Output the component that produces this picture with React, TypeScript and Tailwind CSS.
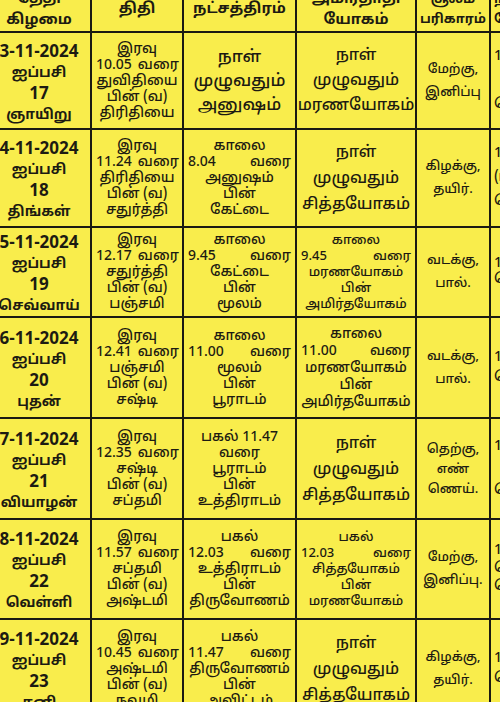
import React from "react";

type Cell = { lines: string[]; size: number; lh: number; bold?: boolean };

const colWidths = ["w-[104px]", "w-[92px]", "w-[113px]", "w-[120px]", "w-[74px]", "w-[120px]"];

const header: Cell[] = [
  { lines: ["தேதி", "கிழமை"], size: 15, lh: 21, bold: true },
  { lines: ["திதி"], size: 15, lh: 20, bold: true },
  { lines: ["நட்சத்திரம்"], size: 15, lh: 20, bold: true },
  { lines: ["அமிர்தாதி", "யோகம்"], size: 15, lh: 21, bold: true },
  { lines: ["சூலம்", "பரிகாரம்"], size: 13, lh: 20, bold: true },
  { lines: ["நல்ல", "நேரம்"], size: 13, lh: 20, bold: true },
];

const rows: { h: string; cells: Cell[] }[] = [
  {
    h: "h-[97px]",
    cells: [
      { lines: ["3-11-2024", "ஐப்பசி", "17", "ஞாயிறு"], size: 17, lh: 21, bold: true },
      { lines: ["இரவு", "10.05 வரை", "துவிதியை", "பின் (வ)", "திரிதியை"], size: 14, lh: 16 },
      { lines: ["நாள்", "முழுவதும்", "அனுஷம்"], size: 17, lh: 24 },
      { lines: ["நாள்", "முழுவதும்", "மரணயோகம்"], size: 16, lh: 25 },
      { lines: ["மேற்கு,", "இனிப்பு"], size: 13, lh: 23 },
      { lines: ["10.30", "", "மெ"], size: 14, lh: 24 },
    ],
  },
  {
    h: "h-[98px]",
    cells: [
      { lines: ["4-11-2024", "ஐப்பசி", "18", "திங்கள்"], size: 17, lh: 21, bold: true },
      { lines: ["இரவு", "11.24 வரை", "திரிதியை", "பின் (வ)", "சதுர்த்தி"], size: 14, lh: 16 },
      { lines: ["காலை", "8.04 வரை", "அனுஷம்", "பின்", "கேட்டை"], size: 14, lh: 16 },
      { lines: ["நாள்", "முழுவதும்", "சித்தயோகம்"], size: 16, lh: 26 },
      { lines: ["கிழக்கு,", "தயிர்."], size: 13, lh: 23 },
      { lines: ["1.30", "(மா)", "மெ"], size: 14, lh: 24 },
    ],
  },
  {
    h: "h-[90px]",
    cells: [
      { lines: ["5-11-2024", "ஐப்பசி", "19", "செவ்வாய்"], size: 17, lh: 21, bold: true },
      { lines: ["இரவு", "12.17 வரை", "சதுர்த்தி", "பின் (வ)", "பஞ்சமி"], size: 14, lh: 16 },
      { lines: ["காலை", "9.45 வரை", "கேட்டை", "பின்", "மூலம்"], size: 14, lh: 16 },
      { lines: ["காலை", "9.45 வரை", "மரணயோகம்", "பின்", "அமிர்தயோகம்"], size: 13, lh: 16 },
      { lines: ["வடக்கு,", "பால்."], size: 13, lh: 23 },
      { lines: ["12.00", "மெ"], size: 14, lh: 16 },
    ],
  },
  {
    h: "h-[101px]",
    cells: [
      { lines: ["6-11-2024", "ஐப்பசி", "20", "புதன்"], size: 17, lh: 21, bold: true },
      { lines: ["இரவு", "12.41 வரை", "பஞ்சமி", "பின் (வ)", "சஷ்டி"], size: 14, lh: 16 },
      { lines: ["காலை", "11.00 வரை", "மூலம்", "பின்", "பூராடம்"], size: 14, lh: 16 },
      { lines: ["காலை", "11.00 வரை", "மரணயோகம்", "பின்", "அமிர்தயோகம்"], size: 14, lh: 17 },
      { lines: ["வடக்கு,", "பால்."], size: 13, lh: 23 },
      { lines: ["10.30", "மெ"], size: 14, lh: 20 },
    ],
  },
  {
    h: "h-[101px]",
    cells: [
      { lines: ["7-11-2024", "ஐப்பசி", "21", "வியாழன்"], size: 17, lh: 21, bold: true },
      { lines: ["இரவு", "12.35 வரை", "சஷ்டி", "பின் (வ)", "சப்தமி"], size: 14, lh: 16 },
      { lines: ["பகல் 11.47", "வரை", "பூராடம்", "பின்", "உத்திராடம்"], size: 14, lh: 16 },
      { lines: ["நாள்", "முழுவதும்", "சித்தயோகம்"], size: 16, lh: 26 },
      { lines: ["தெற்கு,", "எண்", "ணெய்."], size: 13, lh: 20 },
      { lines: ["12.00", "", "மெ"], size: 14, lh: 22 },
    ],
  },
  {
    h: "h-[100px]",
    cells: [
      { lines: ["8-11-2024", "ஐப்பசி", "22", "வெள்ளி"], size: 17, lh: 21, bold: true },
      { lines: ["இரவு", "11.57 வரை", "சப்தமி", "பின் (வ)", "அஷ்டமி"], size: 14, lh: 16 },
      { lines: ["பகல்", "12.03 வரை", "உத்திராடம்", "பின்", "திருவோணம்"], size: 14, lh: 16 },
      { lines: ["பகல்", "12.03 வரை", "சித்தயோகம்", "பின்", "மரணயோகம்"], size: 13, lh: 16 },
      { lines: ["மேற்கு,", "இனிப்பு."], size: 13, lh: 23 },
      { lines: ["11.30", "மெ", "மெ"], size: 14, lh: 18 },
    ],
  },
  {
    h: "h-[100px]",
    cells: [
      { lines: ["9-11-2024", "ஐப்பசி", "23", "சனி"], size: 17, lh: 21, bold: true },
      { lines: ["இரவு", "10.45 வரை", "அஷ்டமி", "பின் (வ)", "நவமி"], size: 14, lh: 16 },
      { lines: ["பகல்", "11.47 வரை", "திருவோணம்", "பின்", "அவிட்டம்"], size: 14, lh: 16 },
      { lines: ["நாள்", "முழுவதும்", "சித்தயோகம்"], size: 16, lh: 26 },
      { lines: ["கிழக்கு,", "தயிர்."], size: 13, lh: 23 },
      { lines: ["10.30", "மெ"], size: 14, lh: 20 },
    ],
  },
];

function CellBox({ cell, col, isHeader }: { cell: Cell; col: number; isHeader?: boolean }) {
  const isLastCol = col === 5;
  return (
    <div
      className={`${colWidths[col]} shrink-0 h-full flex flex-col justify-center border-b-2 border-[#1b1a12] px-[3px] ${
        isLastCol ? "items-start" : "items-center border-r-2"
      } ${!isHeader && col === 0 ? "pt-[6px]" : ""} ${!isHeader && col > 0 && col < 5 ? "pt-[2px]" : ""}`}
      style={{ fontSize: cell.size, lineHeight: `${cell.lh}px`, fontWeight: cell.bold ? 700 : 500 }}
    >
      {cell.lines.map((l, i) => {
        if (/\d\.\d\d வரை/.test(l)) {
          return (
            <div key={i} className="flex w-full justify-between gap-[6px] whitespace-nowrap px-[1px]">
              {l.split(" ").map((w, j) => (
                <span key={j}>{w}</span>
              ))}
            </div>
          );
        }
        const smallTamil = !isHeader && col === 0 && !/^[\d-]+$/.test(l);
        return (
          <div key={i} className={`whitespace-nowrap ${smallTamil ? "text-[14px]" : ""}`}>
            {l || "\u00a0"}
          </div>
        );
      })}
    </div>
  );
}

export default function App() {
  return (
    <div
      className="w-[500px] h-[702px] overflow-hidden bg-[#f9ed4c] text-[#1d1b12]"
      style={{ fontFamily: '"Noto Sans Tamil", "Lohit Tamil", "Noto Sans", sans-serif' }}
    >
      <div className="-ml-[12px] -mt-[12px] w-[623px]">
        <div className="flex h-[45px]">
          {header.map((c, i) => (
            <CellBox key={i} cell={c} col={i} isHeader />
          ))}
        </div>
        {rows.map((r, ri) => (
          <div key={ri} className={`flex ${r.h}`}>
            {r.cells.map((c, i) => (
              <CellBox key={i} cell={c} col={i} />
            ))}
          </div>
        ))}
      </div>
    </div>
  );
}
